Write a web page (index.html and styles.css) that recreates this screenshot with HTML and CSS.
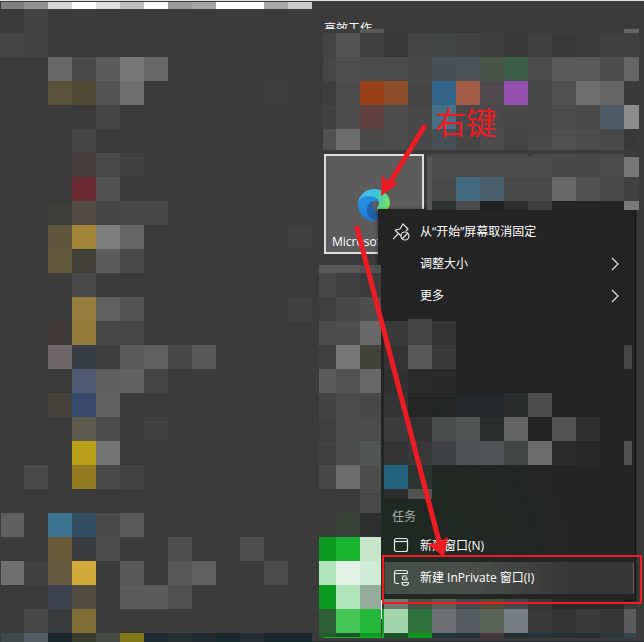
FILE: index.html
```html
<!DOCTYPE html>
<html lang="zh-CN">
<head>
<meta charset="utf-8">
<title>开始</title>
<link rel="stylesheet" href="styles.css">
</head>
<body>
<main class="start">
  <aside class="apps"></aside>
  <section class="tiles">
    <h2 class="group-title">高效工作</h2>
    <a class="tile" href="#">
      <svg class="edge" viewBox="0 0 32 32" aria-hidden="true">
        <defs>
          <linearGradient id="wave" x1="0" y1="0.3" x2="1" y2="0.6">
            <stop offset="0" stop-color="#45b8f0"/><stop offset=".5" stop-color="#3cc8d8"/><stop offset="1" stop-color="#74e35c"/>
          </linearGradient>
          <linearGradient id="body" x1="0" y1="0" x2="0.6" y2="1">
            <stop offset="0" stop-color="#2a97e0"/><stop offset="1" stop-color="#1678dc"/>
          </linearGradient>
        </defs>
        <path fill="url(#wave)" d="M0 14C1 6 8 0 16 0c10 0 16 7 16 14 0 5-4 8-8 8-3 0-5-1-5-3 0-1 2-2 2-5 0-3-3-5-7-6-5-1-11 1-14 6z"/>
        <path fill="url(#body)" d="M0 16C0 10 5 7 11 7c6 0 10 3 10 7-1-2-3-2-5-2-4 1-6 5-6 10 0 5 4 9 8 10C8 33 0 25 0 16z"/>
        <path fill="#1f5fab" d="M16 12c-5 1-7 5-7 9 0 7 6 11 12 10 4-1 7-4 9-7-6 2-13 0-15-5-1-3-1-6 1-7z"/>
      </svg>
      <span class="tile-name">Microsoft Edge</span>
    </a>
  </section>
</main>

<nav class="menu">
  <button class="item" type="button">
    <svg class="icon" viewBox="0 0 18 18" aria-hidden="true"><path d="M0 16l5-5M2 7l6 6M2 7l5-1 3-5 5 5-2 2"/><circle cx="12" cy="13" r="4"/><path d="M9 16l6-6"/></svg>
    <span>从“开始”屏幕取消固定</span>
  </button>
  <button class="item" type="button">
    <span class="icon"></span><span>调整大小</span>
    <svg class="chevron" viewBox="0 0 8 12" aria-hidden="true"><path d="M1 0l6 6-6 6"/></svg>
  </button>
  <button class="item" type="button">
    <span class="icon"></span><span>更多</span>
    <svg class="chevron" viewBox="0 0 8 12" aria-hidden="true"><path d="M1 0l6 6-6 6"/></svg>
  </button>
  <div class="recent"></div>
  <h3 class="label">任务</h3>
  <button class="item" type="button">
    <svg class="icon" viewBox="0 0 18 18" aria-hidden="true"><rect x="1.500" y="1.500" width="13" height="13" rx="2"/><path d="M2 4.500h12"/></svg>
    <span>新建窗口(N)</span>
  </button>
  <button class="item selected" type="button">
    <svg class="icon" viewBox="0 0 18 18" aria-hidden="true"><path d="M6 14.500H3.500a2 2 0 0 1-2-2v-9a2 2 0 0 1 2-2h9a2 2 0 0 1 2 2V5M2 4.500h12M14 7h-2a2 2 0 0 0-1 4h3V9h-2M9 13.500h6.500c0 2-1 3-3.500 3s-3-1-3-3z"/></svg>
    <span>新建 InPrivate 窗口(I)</span>
  </button>
</nav>

<svg class="overlay" id="mosaic" aria-hidden="true" shape-rendering="crispEdges"></svg>
<svg class="overlay marks" aria-hidden="true">
  <path class="stroke" d="M424 127L389 184M357 228L440 545"/>
  <path class="head" d="M381 196l1-21 6 7 11 1zM444 557l-17-13 10-1 11-6z"/>
  <rect class="frame" x="383" y="556" width="258" height="47"/>
</svg>
<div class="note">右键</div>
<script src="mosaic.js"></script>
</body>
</html>
```
FILE: styles.css
```css
* { box-sizing: border-box; }
body {
  margin: 0;
  min-height: 100vh;
  position: relative;
  overflow: hidden;
  background: #3b3b3b;
  color: #fff;
  font: 12px/16px "Open Sans", "Noto Sans CJK SC", sans-serif;
}
.start {
  display: flex;
  min-height: 100vh;
  border-top: 1px solid #dde4df;
}
.apps { width: 312px; flex: none; }
.tiles { flex: 1; padding: 20px 12px; }
.group-title {
  margin: 0 0 117px;
  font-size: 12px;
  font-weight: 400;
  line-height: 16px;
}
.tile {
  display: flex;
  flex-direction: column;
  justify-content: flex-end;
  align-items: center;
  gap: 13px;
  width: 100px;
  height: 100px;
  padding: 2px 6px;
  border: 2px solid #dcdcdc;
  background: #5c5c5c;
  color: #fff;
  text-decoration: none;
  overflow: hidden;
}
.edge { width: 32px; height: 32px; flex: none; }
.tile-name { align-self: flex-start; white-space: nowrap; }
.menu {
  position: absolute;
  left: 378px;
  top: 209px;
  width: 258px;
  padding: 7px 1px 6px 6px;
  border-right: 1px solid #151515;
  border-bottom: 1px solid #151515;
  background: radial-gradient(circle at 0 90%, #1f2a22, #242424 45%);
  box-shadow: 0 1px 4px #0008;
}
.item {
  display: flex;
  align-items: center;
  width: 100%;
  height: 32px;
  padding: 0 14px 0 8px;
  border: 1px solid transparent;
  background: none;
  color: #fff;
  font: inherit;
  text-align: left;
}
.selected {
  background: linear-gradient(90deg, #455047, #4a4e4a 35%, #373737 75%);
  border-right-color: #5c5c5c;
}
.icon {
  width: 18px;
  height: 18px;
  margin-right: 9px;
  flex: none;
}
.icon, .chevron { fill: none; stroke: #e6e6e6; stroke-width: 1.2; }
.chevron { width: 8px; height: 12px; margin-left: auto; overflow: visible; }
.recent { height: 192px; }
.label {
  margin: 0;
  padding-left: 8px;
  height: 26px;
  line-height: 26px;
  font-size: 12px;
  font-weight: 400;
  color: #a9aeaa;
}
.overlay {
  position: absolute;
  inset: 0;
  width: 100%;
  height: 100%;
  pointer-events: none;
}
.stroke { fill: none; stroke: #ed1c24; stroke-width: 5; stroke-linecap: round; }
.head { fill: #ed1c24; }
.frame { fill: none; stroke: #ed1c24; stroke-width: 2; }
.note {
  position: absolute;
  left: 435px;
  top: 103px;
  color: #ed1c24;
  font-size: 31px;
  line-height: 38px;
}
```
FILE: mosaic.js
```js
// Each row: top, bottom, then x edges mapped to colours; a cell ends at the next 24px line.
const rows = `
2 9|1 7f7f7f|24 929292|48 d6d6d6|72 ffffff|96 e0e0e0|120 bfbfbf|144 fafafa|168 999999|192 a6a6a6|216 ffffff|240 ffffff|264 a7a7a7|288 cacaca
9 33|24 434343
33 57|0 454545|24 424242
57 81|48 676767|72 4a4a4a|96 5c5c5c|120 777777|144 676767
81 105|48 5a523b|72 504935|96 555555|120 6f6f6f|264 3e3e3e
105 129|96 444444
129 153|72 454545
153 177|72 463f3f|96 494949|120 3f3f3f
177 201|72 6a2a32|96 515151
201 225|48 3d3d3a|72 524d45|96 454545|120 484848|144 474747
225 249|48 60563d|72 a18435|96 7c7c7c|120 666666|288 404040
249 273|48 61573a|72 403f3a|96 5c5c5c|120 494949
273 297|72 4a4a4a
297 321|72 967f3e|96 606060|120 535353|288 414141
321 345|48 403a39|72 927a38|96 464646|120 464646
345 369|48 6e6769|72 383c45|96 3e3e3e|120 5a5a5a|144 606060|168 484848|192 575757
369 393|72 4e5a71|96 5f5f5f|120 626262|144 444444
393 417|48 43423c|72 384b6e|96 626262
417 441|72 5d5a4e|96 4c4c4c|144 3f3f3f
441 465|72 b99e17|96 737373
465 489|24 4a4a4a|72 937b22|96 4a4a4a|120 424242
513 537|1 5f5f5f|48 3b7390|72 304d62|96 4a4a4a|120 5a5a5a
537 561|48 665a3b|72 3b3c3e|96 4d4d4d|168 4f4f4f|240 4f4f4f
561 585|1 707070|24 414141|48 645b40|72 d2aa3c|120 585858|168 585858|192 606060|264 4c4c4c
585 609|48 3d424e|72 504c40|120 5c5c5c|144 5c5c5c|168 515151
609 633|24 484848|48 3a3b3d|72 806c35
633 642|1 414849|24 525c62|48 1a282e|72 363b2c|96 464a47|120 85781a|144 1e2d33|168 253030|192 212c32|216 182a30|240 252f33|264 17292f|288 17292f
29 33|323 3b3b3b|336 3b3b3b|360 595959|384 3b3b3b|624 666666
33 57|323 444444|336 545454|360 3f3f3f|384 383838|408 444444|432 414544|456 434343|480 3e3e3e|504 383838|528 404040|552 393939|576 3b3b3b|600 404040|624 3f3f3f
57 81|323 464646|336 4f4f4f|360 4c4c4c|384 4b4b4b|408 474747|432 484f56|456 4a5255|480 48534a|504 3b5c48|528 4b4b4b|552 5b5b5b|576 5b5b5b|600 4d4d4d|624 656565
81 105|323 3d3d3d|336 4c4c4c|360 97401a|384 8d4f29|408 454545|432 33658a|456 a35d47|480 514b50|504 9650b0|528 474747|552 505050|576 6e6e6e|600 656565|624 3a3a3a
105 129|323 414141|336 4c4c4c|360 60403e|384 4c4c4c|408 484848|432 467083|456 494949|480 4a4a4a|504 484848|528 464646|552 4c4c4c|576 494949|600 4e5b66|624 8c8c8c
129 150|323 515151|336 6c6c6c|360 494949|384 4c4c4c|408 484848|432 474f57|456 464646|480 4c4c4c|504 444444|528 494949|552 505050|576 4d4d4d|600 494949|624 393939
154 157|427 4a4a4a|432 4a4a4a|456 4a4a4a|480 4a4a4a|504 4a4a4a|532 4a4a4a|552 4a4a4a|576 4a4a4a|600 4a4a4a
157 177|427 575757|432 4c4c4c|456 4c4c4c|480 4c4c4c|504 4c4c4c|528 4c4c4c|552 484848|576 474747|600 4b4b4b|624 777777
177 201|427 555555|432 494949|456 416a7f|480 4a5f6b|504 4a4a4a|528 4a4a4a|552 686868|576 515151|600 4a4a4a|624 414141
201 210|427 555555|432 303332|456 4d4d4d|480 222222|504 2d2d2d|528 3d3d3d|552 242424|576 242424|600 242424|624 7a7a7a
265 273|319 575757|336 575757|360 4f4f4f
273 297|319 474747|336 404040|360 3c3c3c
297 321|319 3f3f3f|336 484848|360 4e4e4e
319 321|408 444444
321 345|319 4c4c4c|336 4e4e4e|360 686868|384 3a3a3a|408 444444|432 353535
345 369|319 404040|336 787878|360 42423c|384 343434|408 585858|432 393939|624 464646
369 393|319 5b5b5b|336 525252|360 686868|384 303030|408 2a2a2a|432 292929
393 417|319 434343|336 4b4b4b|360 484848|384 343434|408 252525|456 262929|480 26292c|504 2a2c2c|528 4d4d4d
417 441|319 3f3f3f|336 4c4c4c|360 4c4c4c|384 3b3b3b|408 323232|432 484c4a|456 525553|480 2a2d2c|504 646464|528 232323|552 525252|576 303030
441 465|319 414141|336 4c4c4c|360 515553|384 333333|408 383838|432 404142|456 505152|480 525355|504 434645|528 6c6c6c|552 2b2b2b|576 282828|624 505050
465 489|319 484848|336 6d6d6d|360 4d4d4d|384 22627c|408 2a352f
489 513|319 3b3b3b|336 3b3b3b|360 494949
489 499|384 2b2d2c|408 505252
513 537|319 3b3b3b|336 394139|360 2d302e
537 561|319 0c9a20|336 1bb631|360 c8e5ca
561 585|319 afe5b8|336 e3f2e6|360 d0ebd5
585 609|319 0c9a20|336 afe5b8|360 96ac9a
609 633|319 2c6034|336 46c557|360 25b83a
633 638|319 245a30|336 1b552a|360 0c9a20|384 1b552a|408 0d9722|432 23383b|456 263336|480 43383c|504 203031|528 24363b|552 213032|576 213032|600 2c383b|624 344549
599 609|384 707871|408 465148|432 5b615a|456 45494d|480 544d38|504 45484b|528 383838|552 292929|576 292929|600 292929
609 633|384 a3d5ad|408 2f723c|432 6d6f73|456 565c60|480 5b6258|504 777b82|528 3a3a3a|552 333333|576 3a3a3a|600 373737|624 5c5c5c
`;
let out = '';
const rect = (x, y, w, h, c) => { out += `<rect x="${x}" y="${y}" width="${w}" height="${h}" fill="#${c}"/>`; };
rows.trim().split('\n').forEach(line => {
  const [span, ...cells] = line.split('|');
  const [top, bottom] = span.split(' ').map(Number);
  cells.forEach(cell => {
    const [x, color] = cell.split(' ');
    const left = Number(x);
    let right = (Math.floor(left / 24) + 1) * 24;
    if (left === 360 && top > 260) right = 381;
    if (left === 624) right = top < 211 ? 639 : top > 598 ? 636 : 632;
    rect(left, top, right - left, bottom - top, color);
  });
});
rect(381, 600, 1, 19, 'ffffff');
rect(382, 609, 2, 29, '1aa02e');
rect(324, 637, 58, 1, '12b52a');
rect(312, 641, 332, 1, '252a2a');
document.getElementById('mosaic').innerHTML = out;
```
